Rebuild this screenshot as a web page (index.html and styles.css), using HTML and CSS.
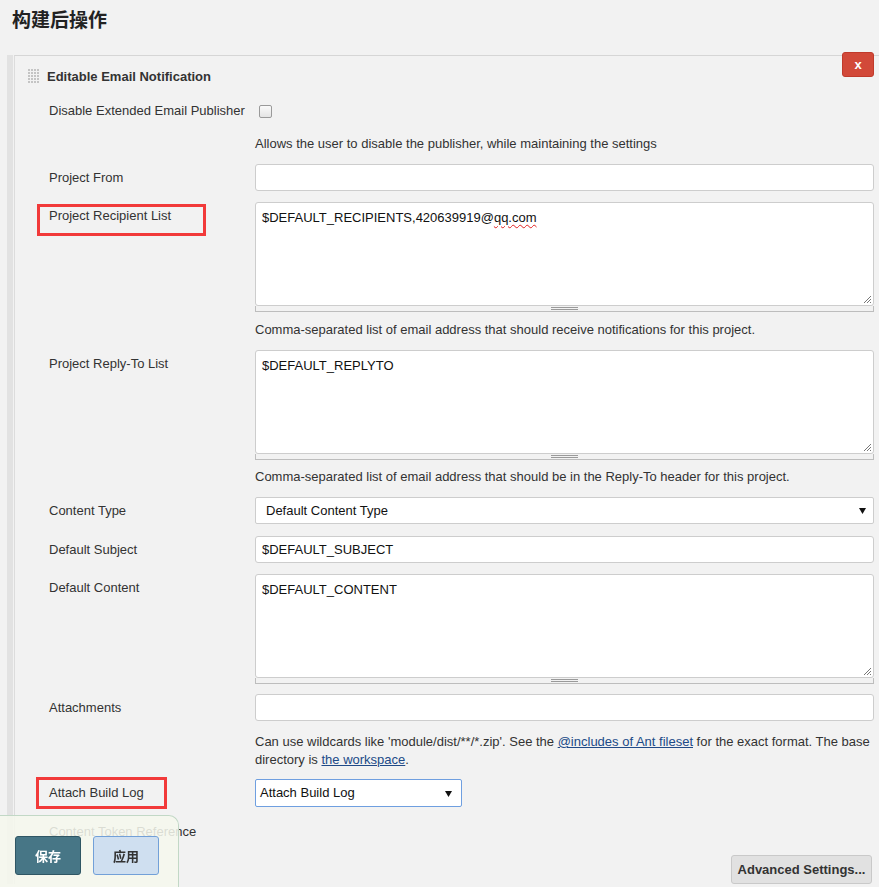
FILE: index.html
```html
<!DOCTYPE html>
<html lang="zh">
<head>
<meta charset="utf-8">
<title>构建后操作</title>
<link rel="stylesheet" href="styles.css">
</head>
<body>
<h1 class="page-title">构建后操作</h1>
<div class="group">
  <div class="section">
    <button class="close-btn" type="button">x</button>
    <div class="section-head">
      <svg class="handle" width="12" height="15" viewBox="0 0 12 15">
        <defs><pattern id="dots" width="3" height="3" patternUnits="userSpaceOnUse"><rect width="2" height="2" fill="#c4c4c4"/></pattern></defs>
        <rect width="12" height="15" fill="url(#dots)"/>
      </svg>
      <span class="section-title">Editable Email Notification</span>
    </div>
    <div class="rows">
      <div class="row row-check">
        <div class="label">Disable Extended Email Publisher</div>
        <div class="field field-check"><span class="checkbox"></span></div>
      </div>
      <div class="row help help-first">
        <div class="label"></div>
        <div class="field">Allows the user to disable the publisher, while maintaining the settings</div>
      </div>
      <div class="row">
        <div class="label">Project From</div>
        <div class="field"><div class="input"></div></div>
      </div>
      <div class="row">
        <div class="label"><span class="annot annot-recip"></span>Project Recipient List</div>
        <div class="field">
          <div class="textarea">$DEFAULT_RECIPIENTS,420639919@<span class="spell">qq.com</span><svg class="corner" width="9" height="9" viewBox="0 0 9 9"><path d="M1 8 L8 1 M4 8 L8 4 M7 8 L8 7" stroke="#777" stroke-width="1"/></svg></div>
          <div class="grip"><span class="grip-lines"></span></div>
        </div>
      </div>
      <div class="row help">
        <div class="label"></div>
        <div class="field">Comma-separated list of email address that should receive notifications for this project.</div>
      </div>
      <div class="row">
        <div class="label">Project Reply-To List</div>
        <div class="field">
          <div class="textarea">$DEFAULT_REPLYTO<svg class="corner" width="9" height="9" viewBox="0 0 9 9"><path d="M1 8 L8 1 M4 8 L8 4 M7 8 L8 7" stroke="#777" stroke-width="1"/></svg></div>
          <div class="grip"><span class="grip-lines"></span></div>
        </div>
      </div>
      <div class="row help help-tight">
        <div class="label"></div>
        <div class="field">Comma-separated list of email address that should be in the Reply-To header for this project.</div>
      </div>
      <div class="row">
        <div class="label">Content Type</div>
        <div class="field"><div class="select">Default Content Type<svg class="arrow" width="7" height="6" viewBox="0 0 7 6"><path d="M0 0 H7 L3.5 6 Z" fill="#111"/></svg></div></div>
      </div>
      <div class="row row-subject">
        <div class="label">Default Subject</div>
        <div class="field"><div class="input">$DEFAULT_SUBJECT</div></div>
      </div>
      <div class="row">
        <div class="label">Default Content</div>
        <div class="field">
          <div class="textarea">$DEFAULT_CONTENT<svg class="corner" width="9" height="9" viewBox="0 0 9 9"><path d="M1 8 L8 1 M4 8 L8 4 M7 8 L8 7" stroke="#777" stroke-width="1"/></svg></div>
          <div class="grip"><span class="grip-lines"></span></div>
        </div>
      </div>
      <div class="row row-attachments">
        <div class="label">Attachments</div>
        <div class="field"><div class="input"></div></div>
      </div>
      <div class="row help help-wide">
        <div class="label"></div>
        <div class="field">Can use wildcards like 'module/dist/**/*.zip'. See the <a href="#">@includes of Ant fileset</a> for the exact format. The base directory is <a href="#">the workspace</a>.</div>
      </div>
      <div class="row row-attach">
        <div class="label"><span class="annot annot-attach"></span>Attach Build Log</div>
        <div class="field"><div class="select select-small">Attach Build Log<svg class="arrow" width="7" height="6" viewBox="0 0 7 6"><path d="M0 0 H7 L3.5 6 Z" fill="#111"/></svg></div></div>
      </div>
      <div class="row row-text">
        <div class="label">Content Token Reference</div>
        <div class="field"></div>
      </div>
      <div class="adv-row">
        <button class="adv-btn" type="button">Advanced Settings...</button>
      </div>
    </div>
  </div>
</div>
<div class="save-bar">
  <button class="btn btn-save" type="button">保存</button>
  <button class="btn btn-apply" type="button">应用</button>
</div>
</body>
</html>
```

FILE: styles.css
```css
html, body {
  margin: 0;
  padding: 0;
  background: #f2f2f2;
  overflow: hidden;
}
body {
  font-family: "Liberation Sans", Arial, "Noto Sans CJK SC", sans-serif;
  font-size: 13px;
  color: #333;
  width: 879px;
  height: 887px;
}
.page-title {
  margin: 0;
  padding: 7px 0 0 12px;
  font-family: "Noto Sans CJK SC", sans-serif;
  font-weight: bold;
  font-size: 19px;
  line-height: 24px;
  height: 48px;
  color: #222;
}
.group {
  margin-left: 7px;
  border-left: 6px solid #e2e2e2;
}
.section {
  position: relative;
  margin-left: 1px;
  border-left: 1px solid #dcdcdc;
  border-top: 1px solid #d6d6d6;
  padding: 0 5px 0 34px;
}
.close-btn {
  position: absolute;
  top: -4px;
  right: 5px;
  width: 32px;
  height: 25px;
  background: #d24939;
  border: 1px solid #c03a2b;
  border-radius: 3px;
  color: #fff;
  font-family: "Liberation Sans", Arial, sans-serif;
  font-weight: bold;
  font-size: 13px;
  padding: 0;
}
.section-head {
  display: flex;
  align-items: center;
  height: 27px;
  margin: 7px 0 0 -21px;
}
.handle {
  display: block;
  margin-right: 7px;
}
.section-title {
  font-weight: bold;
  color: #333;
}
.rows {
  display: flex;
  flex-direction: column;
  gap: 11px;
  margin-top: 9px;
}
.row {
  display: grid;
  grid-template-columns: 206px 619px;
}
.label {
  position: relative;
  line-height: 27px;
}
.row-check .label {
  line-height: 24px;
}
.field-check {
  display: flex;
  align-items: center;
}
.checkbox {
  display: block;
  width: 11px;
  height: 11px;
  margin-left: 4px;
  border: 1px solid #9a9a9a;
  border-radius: 2px;
  background: linear-gradient(#fafafa, #e4e4e4);
}
.help {
  margin-top: -2px;
  line-height: 18px;
}
.help .label {
  line-height: 18px;
}
.help-first {
  margin-top: 1px;
}
.help-tight {
  margin-top: -3px;
}
.help-wide {
  margin-top: 1px;
}
.help a {
  color: #204a87;
  text-decoration: underline;
}
.input {
  box-sizing: border-box;
  height: 27px;
  background: #fff;
  border: 1px solid #cdcdcd;
  border-radius: 3px;
  padding: 0 6px;
  line-height: 25px;
  color: #111;
}
.textarea {
  position: relative;
  box-sizing: border-box;
  height: 104px;
  background: #fff;
  border: 1px solid #cdcdcd;
  border-radius: 3px;
  padding: 7px 6px;
  line-height: 16px;
  color: #111;
}
.spell {
  text-decoration: underline wavy #e02020;
  text-decoration-thickness: 1px;
  text-underline-offset: 2px;
}
.corner {
  position: absolute;
  right: 1px;
  bottom: 1px;
}
.grip {
  box-sizing: border-box;
  height: 6px;
  border: 1px solid #bdbdbd;
  border-top: none;
  display: flex;
  justify-content: center;
}
.grip-lines {
  display: block;
  width: 27px;
  height: 1px;
  margin-top: 1px;
  border-top: 1px solid #9a9a9a;
  border-bottom: 1px solid #9a9a9a;
}
.row-subject {
  margin-top: 1px;
}
.row-attachments {
  margin-top: -1px;
}
.select {
  position: relative;
  box-sizing: border-box;
  height: 27px;
  background: #fff;
  border: 1px solid #cdcdcd;
  border-radius: 2px;
  padding: 0 10px;
  line-height: 25px;
  color: #111;
}
.select .arrow {
  position: absolute;
  right: 7px;
  top: 10px;
}
.row-attach {
  margin-top: -1px;
}
.select-small {
  width: 207px;
  height: 28px;
  line-height: 26px;
  border-color: #6f9fe0;
  padding: 0 4px;
}
.select-small .arrow {
  right: 9px;
  top: 11px;
}
.annot {
  position: absolute;
  border: 3px solid #f23a3a;
  box-sizing: border-box;
  pointer-events: none;
}
.annot-recip {
  left: -12px;
  top: 2px;
  width: 169px;
  height: 32px;
}
.annot-attach {
  left: -13px;
  top: -2px;
  width: 131px;
  height: 32px;
}
.row-text {
  margin-top: 6px;
}
.row-text .label {
  line-height: 16px;
}
.adv-row {
  display: flex;
  justify-content: flex-end;
  margin-top: 4px;
  padding-right: 2px;
}
.adv-btn {
  box-sizing: border-box;
  width: 141px;
  height: 29px;
  background: #e1e1e1;
  border: 1px solid #c9c9c9;
  border-radius: 3px;
  font-family: "Liberation Sans", Arial, sans-serif;
  font-weight: bold;
  font-size: 13px;
  color: #333;
  padding: 0;
}
.save-bar {
  position: fixed;
  left: 0;
  bottom: 0;
  box-sizing: border-box;
  width: 179px;
  height: 72px;
  display: flex;
  gap: 12px;
  padding: 20px 0 0 15px;
  background: rgba(246, 248, 238, 0.86);
  border-top: 1px solid #c2d8c6;
  border-right: 1px solid #c2d8c6;
  border-top-right-radius: 10px;
}
.btn {
  box-sizing: border-box;
  width: 66px;
  height: 39px;
  border-radius: 3px;
  font-family: "Noto Sans CJK SC", sans-serif;
  font-weight: bold;
  font-size: 13px;
  padding: 0;
}
.btn-save {
  background: #477686;
  border: 1px solid #2f5664;
  color: #fff;
}
.btn-apply {
  background: #cfdff0;
  border: 1px solid #72a0d8;
  color: #333;
}
```
